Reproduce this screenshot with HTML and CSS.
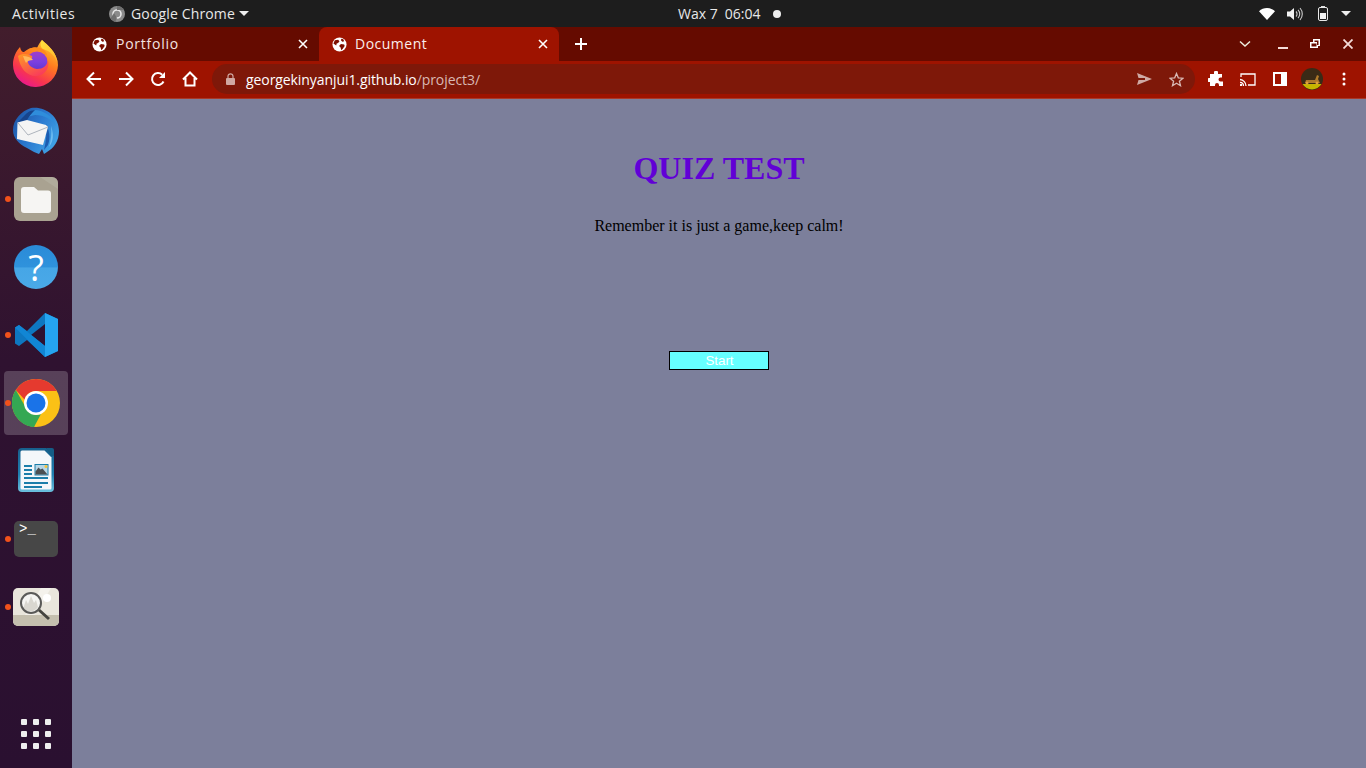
FILE: index.html
```html
<!DOCTYPE html>
<html>
  <head>
    <meta charset="utf-8" />
    <title>Document</title>
    <link rel="stylesheet" href="styles.css">
  </head>

  <body>
    <svg class="defs" width="0" height="0">
      <defs>
        <symbol id="globe" viewBox="0 0 16 16">
          <circle cx="8" cy="8" r="7.500" fill="#fff"/>
          <path d="M3 3.500 6.500 3 8 4.500 6.500 6.500 5 7l-.5 2L3 8 1.500 7zM9.500 7.500 13 8l.5 1.500-2 3-1.500 1.500L9 11l-1.500-1.500zM10 1.800l2 .7 1 2-2 .5-1.500-1.500z" fill="#7d0f00"/>
        </symbol>
        <symbol id="close" viewBox="0 0 12 12">
          <path d="M2 2l8 8M10 2l-8 8" stroke="#fff" stroke-width="1.600" fill="none"/>
        </symbol>
      </defs>
    </svg>

    <header class="topbar">
      <div class="topbar-left">
        <span class="activities">Activities</span>
        <span class="app-menu">
          <svg class="app-icon" width="18" height="18" viewBox="0 0 18 18">
            <circle cx="9" cy="9" r="8" fill="#8b8b8b"/>
            <circle cx="9" cy="9" r="4" fill="none" stroke="#e8e8e8" stroke-width="1.600"/>
            <path d="M9 1a8 8 0 0 1 7 4H9zM2.500 13.500 6 8l3 5-2 4z" fill="#6f6f6f"/>
          </svg>
          <span class="app-name">Google Chrome</span>
          <i class="caret"></i>
        </span>
      </div>
      <div class="clock">
        <span>Wax 7</span><span>06:04</span><i class="notify-dot"></i>
      </div>
      <div class="tray">
        <svg class="tray-wifi" width="16" height="12" viewBox="0 0 16 12"><path d="M0 3.200C2.200 1.200 5 0 8 0s5.800 1.200 8 3.200L8 12z" fill="#fff"/></svg>
        <svg class="tray-volume" width="16" height="14" viewBox="0 0 16 14">
          <path d="M0 4.500h3L7 1v12L3 9.500H0z" fill="#f2f2f2"/>
          <path d="M9 4.500a3.500 3.500 0 0 1 0 5M11 2.800a6 6 0 0 1 0 8.400M13 1a9 9 0 0 1 0 12" stroke="#ccc" stroke-width="1.100" fill="none"/>
        </svg>
        <svg class="tray-battery" width="10" height="15" viewBox="0 0 10 15">
          <path d="M3 0h4v1.500H3z" fill="#ddd"/>
          <rect x=".5" y="1.500" width="9" height="13" rx="1.500" fill="none" stroke="#e8e8e8"/>
          <rect x="2" y="7" width="6" height="6" fill="#f2f2f2"/>
        </svg>
        <i class="caret tray-caret"></i>
      </div>
    </header>

    <div class="desktop">
      <nav class="dock">
        <div class="dock-item">
          <!-- firefox -->
          <svg width="46" height="48" viewBox="0 0 46 48">
            <defs>
              <linearGradient id="fx-body" x1="0.850" y1="0.050" x2="0.300" y2="1">
                <stop offset="0" stop-color="#ffc92e"/><stop offset=".4" stop-color="#ff7a1f"/><stop offset=".75" stop-color="#f8354f"/><stop offset="1" stop-color="#e8188f"/>
              </linearGradient>
              <linearGradient id="fx-flame" x1="0" y1="0" x2="1" y2="1">
                <stop offset="0" stop-color="#ffe23f"/><stop offset="1" stop-color="#ffb02a"/>
              </linearGradient>
              <linearGradient id="fx-core" x1="0.500" y1="0" x2="0.500" y2="1">
                <stop offset="0" stop-color="#a13fc9"/><stop offset=".5" stop-color="#7a3fe0"/><stop offset="1" stop-color="#5b35c8"/>
              </linearGradient>
              <linearGradient id="fx-fox" x1="0" y1="0" x2="0.700" y2="1">
                <stop offset="0" stop-color="#ff9a22"/><stop offset="1" stop-color="#f93a5c"/>
              </linearGradient>
            </defs>
            <path d="M7 8c1 4 2 5 4 5 4-4 9-5 13-4 2-4 3-6 5-8 5 5 15 11 16 25A22.500 22.500 0 0 1 0 25C0 19 3 12 7 8z" fill="url(#fx-body)"/>
            <path d="M29 1c5 5 15 11 16 25-2-9-8-14-15-16-3-2-3-6-1-9z" fill="url(#fx-flame)"/>
            <circle cx="24" cy="23" r="10.500" fill="url(#fx-core)"/>
            <path d="M5 17c5-3 10-2 14 0 1 2-1 3-4 4-1 3 2 8 9 9 6 0 10-3 11-9 2 7-3 16-12 16C13 37 7 29 5 17z" fill="url(#fx-fox)"/>
            <path d="M10 17c4 0 8 1 10 4-3 0-6 1-7 3-1-2-2-4-3-7z" fill="#ffb85a"/>
            <path d="M16 10c5-3 11-2 15 1 2 2 3 4 3 6-3-3-6-5-10-5-3 0-6 0-8-2z" fill="#ff8a1f"/>
          </svg>
        </div>
        <div class="dock-item">
          <!-- thunderbird -->
          <svg width="48" height="48" viewBox="0 0 48 48">
            <defs>
              <linearGradient id="tb-wing" x1="0" y1="0" x2="1" y2="0.600">
                <stop offset="0" stop-color="#1c4f9e"/><stop offset=".55" stop-color="#2a78cf"/><stop offset="1" stop-color="#3fa0e4"/>
              </linearGradient>
            </defs>
            <path d="M19 1C33-1 47 9 47 24c0 10-5 17-12 21l-3 2-2-5-3 5-5-2-7-4C7 37 1 31 1 23 1 13 9 4 19 1z" fill="url(#tb-wing)"/>
            <path d="M22 3c9 0 19 6 22 16-4-7-12-11-21-11l-8 2c1-3 3-6 7-7z" fill="#2f8ddb"/>
            <path d="M34 17c3 6 5 13 2 21l-4 5c2-8 3-17 2-26z" fill="#1c5cb0"/>
            <path d="M39 19c2 6 3 12 0 18l-2 3c2-7 3-14 2-21z" fill="#6fbdf0"/>
            <path d="M6 15 12 9c3-4 7-6 11-6-3 3-6 6-8 10z" fill="#17448c"/>
            <path d="M5.500 15.500 15 13l19 5 2 2-5 18-26-6z" fill="#f4f4f4"/>
            <path d="M6 16l10 12 20-8" stroke="#aeb4bd" fill="none"/>
          </svg>
        </div>
        <div class="dock-item running">
          <svg width="44" height="44" viewBox="0 0 44 44">
            <rect width="44" height="44" rx="6" fill="#a9a291"/>
            <path d="M26 0h12a6 6 0 0 1 6 6v6z" fill="#b8b2a3" opacity=".6"/>
            <path d="M7 13a3 3 0 0 1 3-3h10l4 3.500h10a3 3 0 0 1 3 3V33a3 3 0 0 1-3 3H10a3 3 0 0 1-3-3z" fill="#f6f5f3"/>
          </svg>
        </div>
        <div class="dock-item">
          <div class="help-badge">?</div>
        </div>
        <div class="dock-item running">
          <svg width="44" height="44" viewBox="0 0 44 44">
            <path d="M31 0 44 6v32l-13 6-18-17-8 6-4-2.500V14.500L5 12l8 6z" fill="#0e77c0"/>
            <path d="M31 0 44 6v32l-13 6z" fill="#25a4f0"/>
            <path d="M31 11v22L17 22z" fill="#2e1230"/>
            <path d="M1 14.500 5 12l26 21v11z" fill="#1186d4"/>
          </svg>
        </div>
        <div class="dock-item running active">
          <svg width="48" height="48" viewBox="0 0 48 48">
            <circle cx="24" cy="24" r="24" fill="#fbc116"/>
            <path d="M24 0a24 24 0 0 1 20.800 12H24a12 12 0 0 0-11.500 8.500L3.800 11A24 24 0 0 1 24 0z" fill="#e53a2f"/>
            <path d="M3.800 11 14 29l8 19A24 24 0 0 1 3.800 11z" fill="#34a853"/>
            <path d="M14 29a12 12 0 0 0 15 6L22 48A24 24 0 0 1 4 37z" fill="#34a853"/>
            <circle cx="24" cy="24" r="12" fill="#fff"/>
            <circle cx="24" cy="24" r="9.500" fill="#1a73e8"/>
          </svg>
        </div>
        <div class="dock-item">
          <!-- libreoffice writer -->
          <svg width="38" height="46" viewBox="0 0 38 46">
            <defs>
              <linearGradient id="lo-frame" x1="0" y1="0" x2="0" y2="1">
                <stop offset="0" stop-color="#175f8c"/><stop offset=".6" stop-color="#1f7fb0"/><stop offset="1" stop-color="#6cc0de"/>
              </linearGradient>
            </defs>
            <path d="M5 0h24l8 8v32a4 4 0 0 1-4 4H5a4 4 0 0 1-4-4V4a4 4 0 0 1 4-4z" fill="url(#lo-frame)"/>
            <path d="M5 2.500h22.500l7 7V40a1.500 1.500 0 0 1-1.500 1.500H5A1.500 1.500 0 0 1 3.500 40V4A1.500 1.500 0 0 1 5 2.500z" fill="#f4f7fa"/>
            <path d="M29 0h6a2 2 0 0 1 2 2v6h-3z" fill="#155d86"/>
            <path d="M7 17h8v2H7zM7 21h8v2H7zM7 25h8v2H7zM7 29h24v2H7zM7 34h24v2H7zM7 38h18v2H7z" fill="#1b7eaa"/>
            <rect x="18" y="16.500" width="13" height="10.500" fill="#b7d6e6" stroke="#1b7eaa"/>
            <path d="M18.500 26.500v-3l3-4 2 2 2-1 5 6z" fill="#4a4f52"/>
            <circle cx="29" cy="18.500" r="1.500" fill="#f3c33b"/>
          </svg>
        </div>
        <div class="dock-item running">
          <svg width="44" height="36" viewBox="0 0 44 36">
            <rect width="44" height="36" rx="5" fill="#474747"/>
            <text class="prompt" x="5" y="12">&gt;_</text>
          </svg>
        </div>
        <div class="dock-item running">
          <!-- screenshot -->
          <svg width="46" height="38" viewBox="0 0 46 38">
            <rect width="46" height="38" rx="5" fill="#e9e6dc"/>
            <path d="M0 27h46v6a5 5 0 0 1-5 5H5a5 5 0 0 1-5-5z" fill="#c4bfae"/>
            <path d="M28 0h10L22 27H12z" fill="#f4f2ec"/>
            <circle cx="34" cy="10" r="4" fill="#fff"/>
            <circle cx="18" cy="15" r="10" fill="#f5f5f2"/>
            <path d="M10 21l3-9 2 4 3-8 3 7 2-3 2 7a10 10 0 0 1-15 2z" fill="#d9d7d0"/>
            <circle cx="18" cy="15" r="10" fill="none" stroke="#5a5a58" stroke-width="2"/>
            <path d="M26 22l10 9" stroke="#44443f" stroke-width="3"/>
          </svg>
        </div>
        <div class="show-apps">
          <i></i><i></i><i></i><i></i><i></i><i></i><i></i><i></i><i></i>
        </div>
      </nav>

      <div class="browser">
        <div class="tabstrip">
          <div class="tab">
            <svg class="favicon"><use href="#globe"/></svg>
            <span class="tab-title">Portfolio</span>
            <svg class="tab-close"><use href="#close"/></svg>
          </div>
          <div class="tab tab-active">
            <svg class="favicon"><use href="#globe"/></svg>
            <span class="tab-title">Document</span>
            <svg class="tab-close"><use href="#close"/></svg>
          </div>
          <svg class="new-tab" width="12" height="12" viewBox="0 0 12 12"><path d="M6 0v12M0 6h12" stroke="#fff" stroke-width="2"/></svg>
          <div class="window-controls">
            <svg width="12" height="8" viewBox="0 0 12 8"><path d="M1 1.500 6 6l5-4.500" stroke="#eed" stroke-width="1.500" fill="none"/></svg>
            <svg class="win-min" width="10" height="10" viewBox="0 0 10 10"><path d="M0 9h10" stroke="#f4dcd8" stroke-width="2"/></svg>
            <svg class="win-max" width="10" height="10" viewBox="0 0 10 10"><path d="M3 0h7v7H8v2H0V3h3zm1.500 1.500V3H7v3h1.500V1.500zM1.500 4.500v3h5v-3z" fill="#fff" fill-rule="evenodd"/></svg>
            <svg class="win-close" width="10" height="10" viewBox="0 0 10 10"><path d="M.5.5l9 9M9.500.5l-9 9" stroke="#f4dcd8" stroke-width="1.800"/></svg>
          </div>
        </div>

        <div class="toolbar">
          <button class="tool">
            <svg width="16" height="16" viewBox="0 0 16 16"><path d="M15 8H2M8 1.500 1.500 8 8 14.500" stroke="#fff" stroke-width="2" fill="none"/></svg>
          </button>
          <button class="tool">
            <svg width="16" height="16" viewBox="0 0 16 16"><path d="M1 8h13M8 1.500 14.500 8 8 14.500" stroke="#fff" stroke-width="2" fill="none"/></svg>
          </button>
          <button class="tool">
            <svg width="16" height="16" viewBox="0 0 16 16"><path d="M13.500 10.500A6 6 0 1 1 12.200 3.700" stroke="#fff" stroke-width="2" fill="none"/><path d="M15 1v6H9z" fill="#fff"/></svg>
          </button>
          <button class="tool">
            <svg width="16" height="16" viewBox="0 0 16 16"><path d="M1 8.500 8 1.500l7 7M3.500 7v7.500h9V7" stroke="#fff" stroke-width="2" fill="none"/></svg>
          </button>

          <div class="omnibox">
            <svg class="lock" width="9" height="12" viewBox="0 0 9 12"><path d="M2 5V3.300a2.500 2.500 0 0 1 5 0V5" stroke="#d0a8a2" stroke-width="1.200" fill="none"/><rect y="5" width="9" height="7" rx="1" fill="#d0a8a2"/></svg>
            <span class="url">georgekinyanjui1.github.io<span class="url-path">/project3/</span></span>
            <svg class="omni-send" width="15" height="12" viewBox="0 0 15 12"><path d="M0 0l15 6-15 6 1.500-5H8V5H1.500z" fill="#cfaaa5"/></svg>
            <svg class="omni-star" width="15" height="15" viewBox="0 0 15 15"><path d="M7.500 1.500 9.300 5.800l4.700.4-3.600 3 1.100 4.500-4-2.400-4 2.400 1.100-4.500-3.600-3 4.700-.4z" stroke="#d9b9b4" stroke-width="1.300" fill="none"/></svg>
          </div>

          <button class="tool tool-end">
            <svg width="16" height="16" viewBox="0 0 16 16"><path d="M6 1.500a2 2 0 0 1 4 0V3h4v3.500h-1.500a2 2 0 0 0 0 4H15V15h-4v-1a2 2 0 0 0-4 0v1H2v-4H1a2 2 0 0 1 0-4h1V3h4z" fill="#fff"/></svg>
          </button>
          <button class="tool">
            <svg width="16" height="13" viewBox="0 0 16 13"><path d="M1 4V1h14v11H8" stroke="#fff" stroke-width="1.300" fill="none"/><path d="M0 6.500A6.500 6.500 0 0 1 6 13M0 9.300A3.700 3.700 0 0 1 3.500 13" stroke="#fff" stroke-width="1.300" fill="none"/><circle cx="1" cy="12" r="1.200" fill="#fff"/></svg>
          </button>
          <button class="tool">
            <svg width="14" height="14" viewBox="0 0 14 14"><path d="M0 0h14v14H0zm2 2v10h6V2z" fill="#fff" fill-rule="evenodd"/></svg>
          </button>
          <button class="tool">
            <svg width="22" height="22" viewBox="0 0 22 22">
              <circle cx="11" cy="11" r="11" fill="#3a2a16"/>
              <path d="M1.500 16h19a11 11 0 0 1-19 0z" fill="#c7b500"/>
              <path d="M5 12h9l2-5 2 1-1 3 2 4H4z" fill="#b07a2a"/>
              <circle cx="6" cy="15" r="1.500" fill="#e0a040"/><circle cx="16" cy="15" r="1.500" fill="#e0a040"/>
            </svg>
          </button>
          <button class="tool">
            <svg width="4" height="14" viewBox="0 0 4 14"><circle cx="2" cy="2" r="1.500" fill="#fff"/><circle cx="2" cy="7" r="1.500" fill="#fff"/><circle cx="2" cy="12" r="1.500" fill="#fff"/></svg>
          </button>
        </div>

        <main class="page">
          <h1>QUIZ TEST</h1>
          <p>Remember it is just a game,keep calm!</p>
          <button class="start">Start</button>
        </main>
      </div>
    </div>
  </body>
</html>
```

FILE: styles.css
```css
html {
  font-family: "Open Sans", "Noto Sans", sans-serif;
}

body {
  margin: 0;
  height: 768px;
  overflow: hidden;
  display: flex;
  flex-direction: column;
}

.defs {
  position: absolute;
}

/* top bar */
.topbar {
  height: 27px;
  flex: none;
  display: flex;
  align-items: center;
  background: #1d1d1d;
  color: #e8e8e8;
  font-size: 14px;
}
.topbar-left {
  width: 678px;
  flex: none;
  display: flex;
  align-items: center;
}
.activities {
  margin-left: 12px;
  width: 96px;
  letter-spacing: 0.55px;
}
.app-menu {
  display: flex;
  align-items: center;
  gap: 5px;
}
.app-name {
  letter-spacing: 0.15px;
}
.caret {
  display: block;
  width: 0;
  height: 0;
  margin-left: -1px;
  border: 5px solid transparent;
  border-top: 5px solid #eee;
  border-bottom: 0;
}
.clock {
  display: flex;
  align-items: center;
  gap: 7px;
}
.notify-dot {
  width: 8px;
  height: 8px;
  margin-left: 6px;
  border-radius: 50%;
  background: #eee;
}
.tray {
  margin-left: auto;
  display: flex;
  align-items: center;
  padding-right: 15px;
}
.tray-volume {
  margin-left: 12px;
}
.tray-battery {
  margin-left: 15px;
}
.tray-caret {
  margin-left: 13px;
}

.desktop {
  flex: 1;
  display: flex;
  min-height: 0;
}

/* dock */
.dock {
  width: 72px;
  flex: none;
  display: flex;
  flex-direction: column;
  align-items: center;
  padding-top: 2px;
  box-sizing: border-box;
  background: linear-gradient(#421d2c, #2f1230 45%, #2a1030);
}
.dock-item {
  position: relative;
  width: 64px;
  height: 68px;
  flex: none;
  display: flex;
  align-items: center;
  justify-content: center;
}
.dock-item.running::before {
  content: "";
  position: absolute;
  left: 1px;
  top: 31px;
  width: 6px;
  height: 6px;
  border-radius: 50%;
  background: #f1511b;
}
.dock-item.active {
  height: 64px;
  margin: 2px 0;
  border-radius: 4px;
  background: rgba(255, 255, 255, 0.2);
}
.dock-item.active::before {
  top: 29px;
}
.help-badge {
  width: 44px;
  height: 44px;
  border-radius: 50%;
  background: linear-gradient(#2a8bd8, #2f92dc 50%, #46a6e6 52%, #4aa9e8);
  color: #fff;
  font-size: 36px;
  line-height: 46px;
  text-align: center;
}
.prompt {
  font: 14px "Liberation Mono", monospace;
  fill: #fff;
}
.show-apps {
  margin-top: auto;
  margin-bottom: 19px;
  display: grid;
  grid-template-columns: repeat(3, 6px);
  gap: 6px;
}
.show-apps i {
  height: 6px;
  border-radius: 1px;
  background: #eee;
}

/* browser window */
.browser {
  flex: 1;
  min-width: 0;
  display: flex;
  flex-direction: column;
}
.tabstrip {
  height: 34px;
  flex: none;
  display: flex;
  align-items: center;
  background: #650b00;
  color: #f3e3e0;
  font-size: 14px;
  letter-spacing: 0.75px;
}
.tab {
  width: 240px;
  height: 34px;
  margin-left: 7px;
  flex: none;
  display: flex;
  align-items: center;
  box-sizing: border-box;
  padding: 0 10px 0 13px;
}
.tab + .tab {
  margin-left: 0;
}
.tab-active {
  background: #9e1300;
  border-radius: 8px 8px 0 0;
  color: #fbeeec;
  letter-spacing: 0.5px;
}
.favicon {
  width: 15px;
  height: 15px;
  flex: none;
}
.tab-title {
  margin: 0 0 2px 9px;
  flex: 1;
}
.tab-active .tab-title {
  margin-left: 8px;
}
.tab-close {
  width: 12px;
  height: 12px;
  flex: none;
}
.new-tab {
  margin-left: 16px;
}
.window-controls {
  margin-left: auto;
  display: flex;
  align-items: center;
  padding-right: 13px;
}
.win-min {
  margin-left: 27px;
}
.win-max {
  margin-left: 22px;
}
.win-close {
  margin-left: 23px;
}

.toolbar {
  height: 38px;
  flex: none;
  box-sizing: border-box;
  display: flex;
  align-items: center;
  padding: 0 6px 1px 6px;
  background: #9e1300;
  border-bottom: 1px solid #a83a2a;
}
.tool {
  width: 32px;
  height: 32px;
  flex: none;
  padding: 0;
  border: 0;
  background: none;
  display: flex;
  align-items: center;
  justify-content: center;
}
.tool-end {
  margin-left: 5px;
}
.omnibox {
  flex: 1;
  height: 30px;
  margin-left: 6px;
  display: flex;
  align-items: center;
  padding: 0 11px 0 14px;
  border-radius: 15px;
  background: #7e1809;
  font-size: 14px;
}
.url {
  margin-left: 11px;
  color: #fff;
  flex: 1;
  letter-spacing: -0.08px;
}
.url-path {
  color: #d9b9b4;
}
.omni-star {
  margin-left: 17px;
}

/* page content */
.page {
  flex: 1;
  background: #7c7f9b;
  font-family: "Liberation Serif", serif;
  text-align: center;
  padding-top: 51px;
}
.page h1 {
  margin: 0;
  font-size: 32px;
  color: #6100d6;
}
.page p {
  margin: 30px 0 0;
  font-size: 16px;
  color: #000;
}
.start {
  display: block;
  width: 100px;
  height: 19px;
  margin: 116px auto 0;
  padding: 0 0 0 1px;
  border: 1px solid #000;
  background: #66ffff;
  color: #fff;
  font: 13.33px "Liberation Sans", sans-serif;
}
```
